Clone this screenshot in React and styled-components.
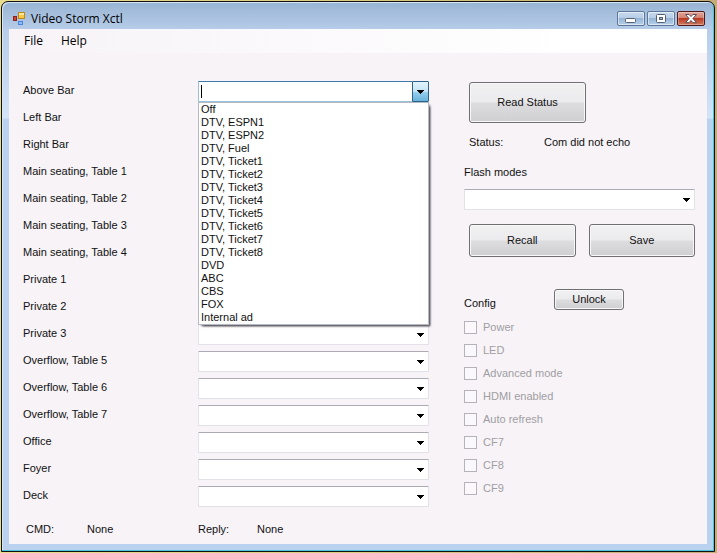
import React, { useState } from 'react';
import styled, { createGlobalStyle, css } from 'styled-components';

const zones = [
  'Left Bar',
  'Right Bar',
  'Main seating, Table 1',
  'Main seating, Table 2',
  'Main seating, Table 3',
  'Main seating, Table 4',
  'Private 1',
  'Private 2',
  'Private 3',
  'Overflow, Table 5',
  'Overflow, Table 6',
  'Overflow, Table 7',
  'Office',
  'Foyer',
  'Deck',
];

const sources = [
  'Off',
  'DTV, ESPN1',
  'DTV, ESPN2',
  'DTV, Fuel',
  'DTV, Ticket1',
  'DTV, Ticket2',
  'DTV, Ticket3',
  'DTV, Ticket4',
  'DTV, Ticket5',
  'DTV, Ticket6',
  'DTV, Ticket7',
  'DTV, Ticket8',
  'DVD',
  'ABC',
  'CBS',
  'FOX',
  'Internal ad',
];

const configFlags = [
  'Power',
  'LED',
  'Advanced mode',
  'HDMI enabled',
  'Auto refresh',
  'CF7',
  'CF8',
  'CF9',
];

const Arrow = () => (
  <svg width="7" height="4" viewBox="0 0 7 4" shapeRendering="crispEdges" aria-hidden="true">
    <path d="M0 0h7v1h-1v1h-1v1h-1v1h-1v-1h-1v-1h-1v-1h-1z" fill="#000" />
  </svg>
);

const AppIcon = () => (
  <svg width="14" height="14" viewBox="0 0 14 14" aria-hidden="true">
    <rect x="6.5" y="0.5" width="6" height="6" fill="#fbc740" stroke="#b98a1c" />
    <rect x="7" y="1" width="5" height="2" fill="#fde79a" />
    <rect x="1.5" y="4.5" width="3" height="4" fill="#d8432c" stroke="#8d2317" />
    <rect x="6.5" y="9.5" width="4" height="3" fill="#8dbcfb" stroke="#4a82dc" />
  </svg>
);

const SourceSelect = ({ id }) => (
  <SelectWrap>
    <Select id={id} defaultValue="">
      <option value="" />
      {sources.map((source) => (
        <option key={source}>{source}</option>
      ))}
    </Select>
    <SelectArrow>
      <Arrow />
    </SelectArrow>
  </SelectWrap>
);

const SourceCombo = ({ id }) => {
  const [open, setOpen] = useState(true);
  const [value, setValue] = useState('');

  const pick = (source) => {
    setValue(source);
    setOpen(false);
  };

  return (
    <Combo>
      <ComboInput
        id={id}
        role="combobox"
        aria-expanded={open}
        aria-controls="source-list"
        autoComplete="off"
        value={value}
        onChange={(e) => setValue(e.target.value)}
      />
      {open && !value && <Caret />}
      <ComboButton type="button" aria-label="Show sources" onClick={() => setOpen(!open)}>
        <Arrow />
      </ComboButton>
      {open && (
        <List id="source-list" role="listbox">
          {sources.map((source) => (
            <Option
              key={source}
              role="option"
              aria-selected={source === value}
              onClick={() => pick(source)}
            >
              {source}
            </Option>
          ))}
        </List>
      )}
    </Combo>
  );
};

const App = () => {
  return (
    <Desktop>
      <GlobalStyle />
      <Window>
        <TitleBar>
          <AppIcon />
          <Title>Video Storm Xctl</Title>
          <Caption>
            <CaptionButton type="button" aria-label="Minimize">
              <svg width="12" height="10" viewBox="0 0 12 10">
                <rect x="0.5" y="4.5" width="10" height="4" rx="1" fill="#fff" stroke="#555f70" />
              </svg>
            </CaptionButton>
            <CaptionButton type="button" aria-label="Maximize">
              <svg width="12" height="10" viewBox="0 0 12 10">
                <rect x="1.5" y="0.5" width="9" height="8" rx="1" fill="#fff" stroke="#555f70" />
                <rect x="4.5" y="3.5" width="3" height="2" fill="#9db9d8" stroke="#555f70" />
              </svg>
            </CaptionButton>
            <CaptionButton type="button" aria-label="Close" $close>
              <svg width="12" height="10" viewBox="0 0 12 10">
                <path
                  d="M0.5 0.5h3.6l1.9 2.1 1.9-2.1h3.6l-3.6 4 3.6 4.2h-3.6l-1.9-2.3-1.9 2.3h-3.6l3.6-4.2z"
                  fill="#fff"
                  stroke="#5c4f58"
                />
              </svg>
            </CaptionButton>
          </Caption>
        </TitleBar>
        <Client>
          <Menu>
            <MenuItem type="button">File</MenuItem>
            <MenuItem type="button">Help</MenuItem>
          </Menu>
          <Panels>
            <Zones>
              <ZoneRow>
                <ZoneLabel htmlFor="zone-above">Above Bar</ZoneLabel>
                <SourceCombo id="zone-above" />
              </ZoneRow>
              {zones.map((zone, i) => (
                <ZoneRow key={zone}>
                  <ZoneLabel htmlFor={`zone-${i}`}>{zone}</ZoneLabel>
                  <SourceSelect id={`zone-${i}`} />
                </ZoneRow>
              ))}
            </Zones>
            <Side>
              <ReadRow>
                <ReadButton type="button">Read Status</ReadButton>
              </ReadRow>
              <StatusRow>
                <span>Status:</span>
                <span>Com did not echo</span>
              </StatusRow>
              <FlashLabel htmlFor="flash">Flash modes</FlashLabel>
              <SourceSelect id="flash" />
              <FlashButtons>
                <Button type="button">Recall</Button>
                <Button type="button">Save</Button>
              </FlashButtons>
              <ConfigHead>
                <span>Config</span>
                <UnlockButton type="button">Unlock</UnlockButton>
              </ConfigHead>
              <Flags>
                {configFlags.map((flag) => (
                  <Flag key={flag}>
                    <CheckBox type="checkbox" disabled />
                    {flag}
                  </Flag>
                ))}
              </Flags>
            </Side>
          </Panels>
          <Footer>
            <span>CMD:</span>
            <span>None</span>
            <span>Reply:</span>
            <span>None</span>
          </Footer>
        </Client>
      </Window>
    </Desktop>
  );
};

export default App;

const GlobalStyle = createGlobalStyle`
  * {
    box-sizing: border-box;
  }

  body {
    margin: 0;
    font-family: 'Liberation Sans', Arial, sans-serif;
    font-size: 11px;
    line-height: 13px;
    color: #111;
  }

  button,
  input,
  select {
    font: inherit;
    color: inherit;
    margin: 0;
  }
`;

const Desktop = styled.div`
  min-height: 100vh;
  padding: 1px 2px 1px 1px;
  background: linear-gradient(90deg, #e9dc8c, #d9cb80 50%, #c4ac78);
`;

const Window = styled.div`
  border: 1px solid #111;
  border-radius: 7px 7px 0 0;
  padding: 0 7px 7px;
  background: linear-gradient(#98b4d3, #b7cde9 28px, #d3e4f7 116px, #bad1f0 117px);
  box-shadow: inset -1px -1px 0 #4cc3d9, inset 1px 1px 0 #d5e6f7;
`;

const TitleBar = styled.header`
  display: flex;
  align-items: center;
  height: 27px;
  padding: 6px 2px 0 3px;
`;

const Title = styled.h1`
  flex: 1;
  margin: 0 0 0 5px;
  font: 12px/16px 'Open Sans', 'Segoe UI', sans-serif;
  color: #000;
`;

const Caption = styled.div`
  display: flex;
  gap: 2px;
`;

const CaptionButton = styled.button`
  display: flex;
  align-items: center;
  justify-content: center;
  width: 28px;
  height: 15px;
  padding: 0;
  border: 1px solid #5d7798;
  border-radius: 2px;
  background: linear-gradient(#c7daee, #b4cce6 50%, #96b4d6 50%, #b5d0ea);
  box-shadow: inset 0 0 0 1px rgba(255, 255, 255, 0.5);

  ${({ $close }) =>
    $close &&
    css`
      border-color: #4f1a1c;
      background: linear-gradient(#e3a598, #d27e6d 50%, #b93a24 50%, #d37a5c);
      box-shadow: inset 0 0 0 1px rgba(255, 255, 255, 0.3);
    `}
`;

const Client = styled.main`
  background: #f7f3f7;
`;

const Menu = styled.nav`
  display: flex;
  gap: 18px;
  height: 24px;
  padding: 0 15px;
  background: linear-gradient(90deg, #f7f3f7, #fff 80%);
`;

const MenuItem = styled.button`
  padding: 0;
  border: 0;
  background: none;
  font: 12px/24px 'Open Sans', 'Segoe UI', sans-serif;
  color: #000;
`;

const Panels = styled.div`
  display: grid;
  grid-template-columns: minmax(0, 1fr) 231px;
  column-gap: 35px;
  padding: 28px 12px 0 14px;
`;

const Zones = styled.div`
  display: flex;
  flex-direction: column;
  gap: 6px;
`;

const ZoneRow = styled.div`
  display: grid;
  grid-template-columns: 175px minmax(0, 1fr);
  height: 21px;
`;

const ZoneLabel = styled.label`
  padding-top: 3px;
`;

const SelectWrap = styled.div`
  position: relative;
  height: 21px;
`;

const Select = styled.select`
  display: block;
  width: 100%;
  height: 21px;
  padding: 0 20px 0 3px;
  appearance: none;
  border: 1px solid #e3e2e8;
  border-top-color: #acaab4;
  border-radius: 1px;
  background: #fff;
`;

const SelectArrow = styled.span`
  position: absolute;
  top: 9px;
  right: 5px;
  display: flex;
  pointer-events: none;
`;

const Combo = styled.div`
  position: relative;
  display: flex;
  height: 21px;
`;

const ComboInput = styled.input`
  flex: 1;
  min-width: 0;
  padding: 0 3px;
  border: 1px solid #9cc0d8;
  border-top-color: #3d7bad;
  border-right: 0;
  border-radius: 1px 0 0 1px;
  background: #fff;
  outline: none;
`;

const Caret = styled.span`
  position: absolute;
  top: 4px;
  left: 3px;
  width: 1px;
  height: 13px;
  background: #000;
`;

const ComboButton = styled.button`
  display: flex;
  align-items: center;
  justify-content: center;
  width: 17px;
  padding: 0;
  border: 1px solid #2c628b;
  border-radius: 0 1px 1px 0;
  background: linear-gradient(#e2f3fc, #c4e5f6 50%, #98d1ef 50%, #68b3db);
`;

const List = styled.ul`
  position: absolute;
  z-index: 1;
  top: 100%;
  left: 0;
  right: 0;
  margin: 0;
  padding: 0 1px;
  list-style: none;
  border: 1px solid #b4bac4;
  background: #fff;
  box-shadow: 3px 3px 2px -2px #55535a, 2px 2px 2px -1px #77757c;
`;

const Option = styled.li`
  height: 13px;
  padding-left: 1px;
  line-height: 13px;
`;

const Side = styled.div`
  display: flex;
  flex-direction: column;
`;

const Button = styled.button`
  height: 33px;
  padding: 0;
  border: 1px solid #707070;
  border-radius: 3px;
  background: linear-gradient(#f2f1f2, #ebeaec 48%, #dddcdf 52%, #cfced1);
  box-shadow: inset 0 0 0 1px #f8f7f9;
`;

const ReadRow = styled.div`
  display: flex;
  padding: 1px 0 0 5px;
`;

const ReadButton = styled(Button)`
  width: 117px;
  height: 41px;
`;

const UnlockButton = styled(Button)`
  width: 70px;
  height: 21px;
`;

const StatusRow = styled.div`
  display: grid;
  grid-template-columns: 75px 1fr;
  margin-top: 13px;
  padding-left: 5px;
`;

const FlashLabel = styled.label`
  margin: 17px 0 10px;
`;

const FlashButtons = styled.div`
  display: grid;
  grid-template-columns: 1fr 1fr;
  gap: 13px;
  margin-top: 14px;
  padding-left: 5px;
`;

const ConfigHead = styled.div`
  display: grid;
  grid-template-columns: 90px 1fr;
  align-items: end;
  margin-top: 32px;
`;

const Flags = styled.div`
  display: flex;
  flex-direction: column;
  gap: 10px;
  margin-top: 11px;
`;

const Flag = styled.label`
  display: flex;
  align-items: center;
  gap: 6px;
  color: #a09ea3;
`;

const CheckBox = styled.input`
  width: 13px;
  height: 13px;
  appearance: none;
  border: 1px solid #b5b3b9;
  background: #faf8fb;
`;

const Footer = styled.footer`
  display: grid;
  grid-template-columns: 61px 111px 59px 1fr;
  padding: 16px 17px 8px;
`;
